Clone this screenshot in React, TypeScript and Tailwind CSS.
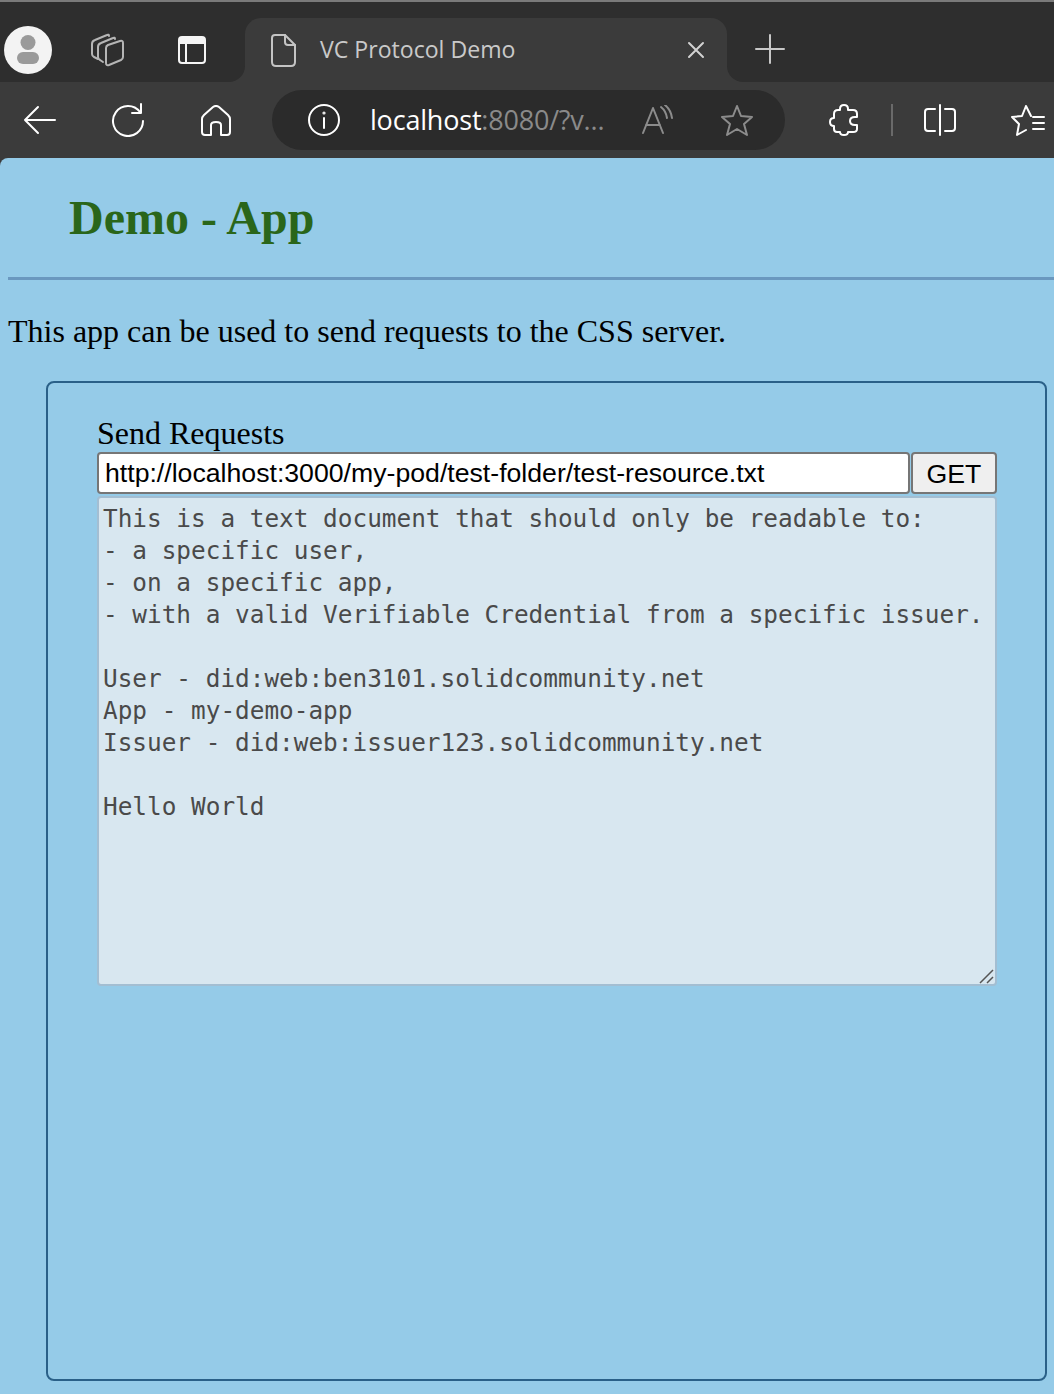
const documentText = `This is a text document that should only be readable to:
- a specific user,
- on a specific app,
- with a valid Verifiable Credential from a specific issuer.

User - did:web:ben3101.solidcommunity.net
App - my-demo-app
Issuer - did:web:issuer123.solidcommunity.net

Hello World`;

// Browser chrome icons, drawn to match the Edge toolbar
const Svg = ({ w, h, className, children }: { w: number; h: number; className?: string; children: React.ReactNode }) => (
  <svg
    width={w}
    height={h}
    viewBox={`0 0 ${w} ${h}`}
    fill="none"
    stroke="currentColor"
    strokeWidth="2"
    strokeLinecap="round"
    strokeLinejoin="round"
    className={className}
  >
    {children}
  </svg>
);

const Avatar = () => (
  <div className="w-[48px] h-[48px] rounded-full bg-[#f3f3f3] flex items-center justify-center">
    <svg width="24" height="30" viewBox="0 0 24 30" fill="#9a9a9a">
      <circle cx="12" cy="7.5" r="7.5" />
      <rect x="1" y="17" width="22" height="12" rx="6" />
    </svg>
  </div>
);

const TabsIcon = () => (
  <Svg w={34} h={34} className="text-[#b5b5b5]">
    <path d="M7 26 L3 24 Q1 23 1 21 V11 Q1 8 4 7 L16 2 Q18 1 18 3" />
    <path d="M12 29 L9 27 Q7 26 7 24 V14 Q7 11 10 10 L22 5 Q24 4 24 6" />
    <path d="M15 15 Q15 13 17 12 L29 8 Q32 7 32 10 V24 Q32 26 30 27 L18 32 Q15 33 15 30 Z" />
  </Svg>
);

const VerticalTabsIcon = () => (
  <Svg w={28} h={28} className="text-[#f5f5f5]">
    <rect x="1" y="1" width="26" height="26" rx="3" />
    <path d="M2 3 H26 M2 5 H26 M2 7 H26" />
    <path d="M8 8 V27" />
  </Svg>
);

const DocIcon = () => (
  <Svg w={25} h={33} className="text-[#c4c4c4]">
    <path d="M4 1 H14 L24 11 V28 Q24 32 20 32 H5 Q1 32 1 28 V4 Q1 1 4 1 Z" />
    <path d="M14 1 V8 Q14 11 17 11 H24" />
  </Svg>
);

const CloseIcon = () => (
  <Svg w={18} h={18} className="text-[#d2d2d2]">
    <path d="M2 2 L16 16 M16 2 L2 16" />
  </Svg>
);

const PlusIcon = () => (
  <Svg w={30} h={30} className="text-[#c8c8c8]">
    <path d="M15 1 V29 M1 15 H29" />
  </Svg>
);

const BackIcon = () => (
  <Svg w={34} h={30} className="text-white">
    <path d="M15 2 L2 15 L15 28 M2 15 H32" />
  </Svg>
);

const ReloadIcon = () => (
  <Svg w={34} h={34} className="text-white">
    <path d="M29 9 A15 15 0 1 0 32 18" />
    <path d="M30 1 V10 H21" />
  </Svg>
);

const HomeIcon = () => (
  <Svg w={30} h={31} className="text-white">
    <path d="M12 2 Q15 0 18 2 L27 10 Q29 12 29 14 V27 Q29 30 26 30 H20 V20 Q20 17 15 17 Q10 17 10 20 V30 H4 Q1 30 1 27 V14 Q1 12 3 10 Z" />
  </Svg>
);

const InfoIcon = () => (
  <Svg w={34} h={34} className="text-white">
    <circle cx="17" cy="17" r="15" />
    <path d="M17 15 V25" />
    <circle cx="17" cy="10" r="0.6" />
  </Svg>
);

const ReadAloudIcon = () => (
  <Svg w={32} h={30} className="text-[#8c8c8c]">
    <path d="M2 28 L12 3 L22 28 M5 20 H19" />
    <path d="M20 2 Q25 6 26 13" />
    <path d="M24 0 Q30 5 31 13" />
  </Svg>
);

const StarPath = "M16 2 L20 12 L31 13 L23 20 L26 31 L16 25 L6 31 L9 20 L1 13 L12 12 Z";

const StarIcon = () => (
  <Svg w={32} h={32} className="text-[#8c8c8c]">
    <path d={StarPath} />
  </Svg>
);

const PuzzleIcon = () => (
  <Svg w={30} h={32} className="text-white">
    <path d="M11 5 Q11 1 15 1 Q19 1 19 5 V6 H24 Q28 6 28 10 V13 H26 Q21 13 21 17 Q21 21 26 21 H28 V25 Q28 28 24 28 H19 Q19 31 15 31 Q11 31 11 28 H8 Q5 28 5 25 V22 Q1 22 1 18 Q1 14 5 14 V10 Q5 6 9 6 H11 Z" />
  </Svg>
);

const SplitIcon = () => (
  <Svg w={32} h={32} className="text-white">
    <path d="M11 5 H4 Q1 5 1 8 V24 Q1 27 4 27 H11" />
    <path d="M21 5 H28 Q31 5 31 8 V24 Q31 27 28 27 H21" />
    <path d="M16 1 V31" />
  </Svg>
);

const FavoritesIcon = () => (
  <Svg w={34} h={32} className="text-white">
    <path d="M20 12 L15 2 L11 12 L1 13 L8 20 L6 31 L15 26" />
    <path d="M22 13 H33 M22 19 H33 M22 25 H33" />
  </Svg>
);

const BrowserChrome = () => (
  <div className="bg-[#3b3b3b] font-['Open_Sans',sans-serif]">
    <div className="h-[2px] bg-[#7a7a7a]" />

    {/* Tab strip */}
    <div className="flex h-[80px]">
      <div className="w-[245px] shrink-0 bg-[#2e2e2e] rounded-br-[16px] flex items-center pl-[4px] pt-[16px]">
        <Avatar />
        <div className="ml-[39px]">
          <TabsIcon />
        </div>
        <div className="ml-[53px]">
          <VerticalTabsIcon />
        </div>
      </div>
      <div className="w-[482px] shrink-0 bg-[#2e2e2e]">
        <div className="h-[64px] mt-[16px] bg-[#3b3b3b] rounded-t-[16px] flex items-center pl-[26px] pr-[22px]">
          <DocIcon />
          <span className="ml-[24px] mb-[2px] text-[23.1px] text-[#c9c9c9]">VC Protocol Demo</span>
          <div className="ml-auto">
            <CloseIcon />
          </div>
        </div>
      </div>
      <div className="flex-1 bg-[#2e2e2e] rounded-bl-[16px] flex items-center pl-[28px] pt-[14px]">
        <PlusIcon />
      </div>
    </div>

    {/* Toolbar */}
    <div className="flex items-center h-[76px] pl-[23px] overflow-hidden">
      <BackIcon />
      <div className="ml-[54px]">
        <ReloadIcon />
      </div>
      <div className="ml-[56px]">
        <HomeIcon />
      </div>
      <div className="ml-[41px] w-[513px] h-[60px] shrink-0 bg-[#2b2b2b] rounded-full flex items-center pl-[35px]">
        <InfoIcon />
        <span className="ml-[29px] w-[236px] text-[27px] whitespace-nowrap tracking-[-0.2px] text-white">
          localhost<span className="text-[#8a8a8a]">:8080/?v...</span>
        </span>
        <div className="ml-[35px]">
          <ReadAloudIcon />
        </div>
        <div className="ml-[48px]">
          <StarIcon />
        </div>
      </div>
      <div className="ml-[44px]">
        <PuzzleIcon />
      </div>
      <div className="ml-[32px] w-[2px] h-[32px] bg-[#6a6a6a]" />
      <div className="ml-[31px]">
        <SplitIcon />
      </div>
      <div className="ml-[55px]">
        <FavoritesIcon />
      </div>
    </div>
  </div>
);

export default function App() {
  return (
    <div className="w-[1054px] h-[1394px] overflow-hidden bg-[#3b3b3b]">
      <BrowserChrome />

      <main className="h-[1236px] bg-[#95cbe8] rounded-tl-[8px] pl-[8px] font-['Liberation_Serif',serif] text-black">
        <h1 className="pl-[61px] pt-[30px] h-[122px] border-b-[3px] border-[#6a98bf] text-[48px] leading-[60px] font-bold text-[#2a661a]">
          Demo - App
        </h1>
        <p className="mt-[33px] text-[32px] leading-[37px]">
          This app can be used to send requests to the CSS server.
        </p>

        <section className="ml-[38px] mt-[31px] w-[1001px] h-[1000px] border-2 border-[#2a6088] rounded-[8px] pl-[49px] pt-[32px]">
          <label className="block text-[32px] leading-[37px]">Send Requests</label>
          <div className="flex gap-px">
            <input
              readOnly
              value="http://localhost:3000/my-pod/test-folder/test-resource.txt"
              className="w-[813px] h-[42px] px-[6px] bg-white border-2 border-[#767676] rounded-[4px] font-['Liberation_Sans',sans-serif] text-[26.67px] text-black outline-none"
            />
            <button className="w-[86px] h-[42px] pb-[3px] bg-[#efefef] border-2 border-[#767676] rounded-[4px] font-['Liberation_Sans',sans-serif] text-[26.67px] text-black">
              GET
            </button>
          </div>
          <div className="relative mt-[2px] w-[900px] h-[490px]">
            <textarea
              readOnly
              defaultValue={documentText}
              className="block w-full h-full px-[4px] pt-[5px] pb-[4px] resize-none bg-[#d8e7f0] border-2 border-[#a3bed2] rounded-[4px] font-['DejaVu_Sans_Mono',monospace] text-[24.38px] leading-[32px] text-[#4a4a4a] outline-none whitespace-pre"
            />
            {/* resize grip sits over the textarea corner */}
            <svg width="16" height="16" viewBox="0 0 16 16" className="absolute right-[2px] bottom-[2px] text-[#555]" stroke="currentColor" strokeWidth="1.5">
              <path d="M1 15 L14 2 M8 15 L14 9" />
            </svg>
          </div>
        </section>
      </main>
    </div>
  );
}
